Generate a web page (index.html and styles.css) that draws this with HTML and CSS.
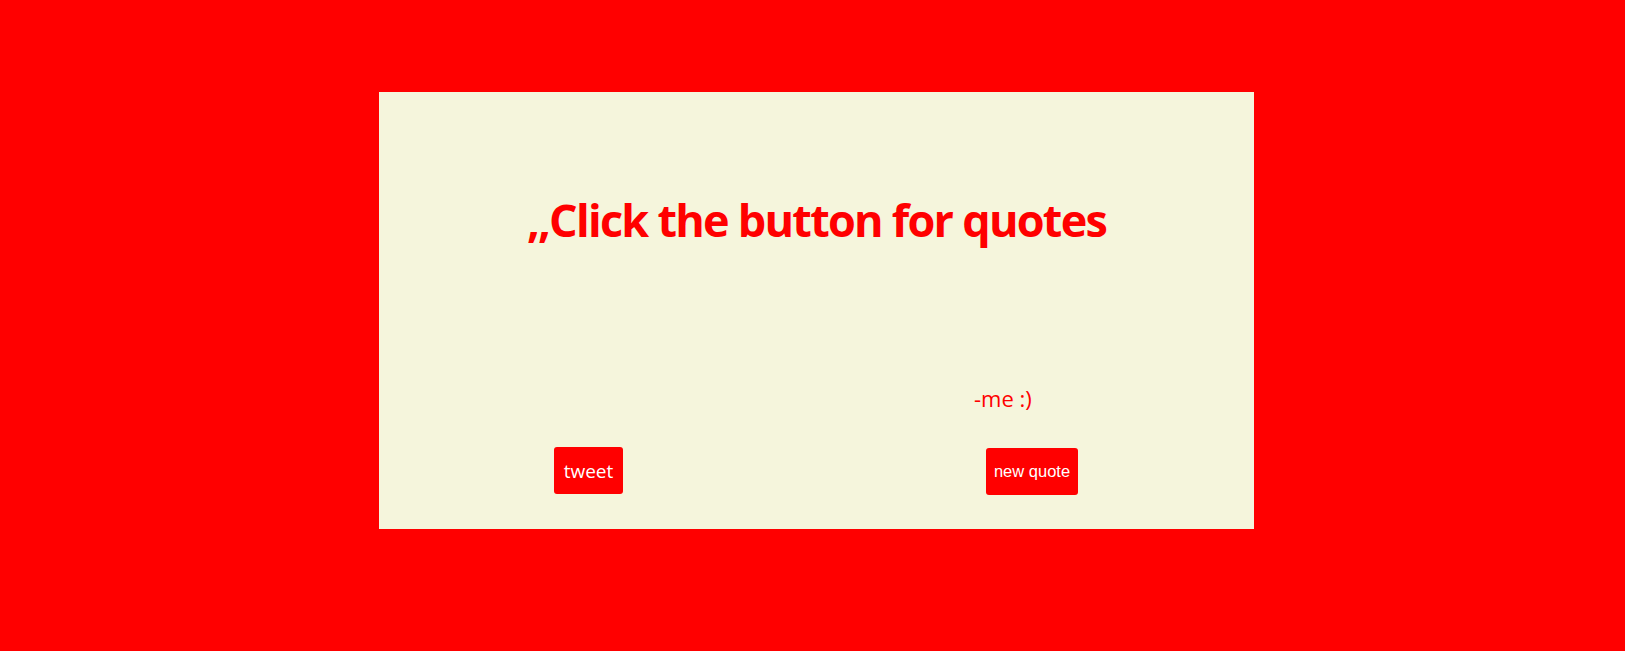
FILE: index.html
```html
<!DOCTYPE html>
<html lang="en">
<head>
<meta charset="utf-8">
<title>Quotes</title>
<link rel="stylesheet" href="styles.css">
</head>
<body>
  <main class="card">
    <h1 class="quote">,,Click the button for quotes</h1>
    <div class="author-row"><span class="author">-me :)</span></div>
    <div class="actions">
      <button class="btn btn-tweet" type="button">tweet</button>
      <button class="btn btn-new" type="button">new quote</button>
    </div>
  </main>
</body>
</html>
```

FILE: styles.css
```css
html, body {
  margin: 0;
  padding: 0;
}
body {
  background: #ff0000;
  padding-left: 8px;
  height: 651px;
  box-sizing: border-box;
  overflow: hidden;
}
.card {
  width: 875px;
  height: 437px;
  margin: 92px auto 0;
  background: #f5f5dc;
  box-sizing: border-box;
  padding: 98px 0 35px;
  display: flex;
  flex-direction: column;
}
.quote {
  margin: 0;
  text-align: center;
  font-family: "Open Sans", "Noto Sans", sans-serif;
  font-weight: 700;
  font-size: 45px;
  line-height: 60px;
  color: #ff0000;
  letter-spacing: -1.75px;
}
.author-row {
  margin-top: 134px;
  height: 28px;
  padding-left: 595px;
}
.author {
  font-family: "Open Sans", "Noto Sans", sans-serif;
  font-size: 22px;
  line-height: 28px;
  color: #ff0000;
}
.actions {
  margin-top: 35px;
  display: flex;
  align-items: flex-start;
  padding-left: 175px;
}
.btn {
  background: #ff0000;
  color: #ffffff;
  border: none;
  border-radius: 3px;
  height: 47px;
  box-sizing: border-box;
  padding: 0;
  display: flex;
  align-items: center;
  justify-content: center;
}
.btn-tweet {
  width: 69px;
  font-family: "Open Sans", "Noto Sans", sans-serif;
  font-size: 19px;
}
.btn-new {
  width: 92px;
  margin-left: 363px;
  margin-top: 1px;
  font-family: "Liberation Sans", Arial, sans-serif;
  font-size: 16.5px;
}
```
